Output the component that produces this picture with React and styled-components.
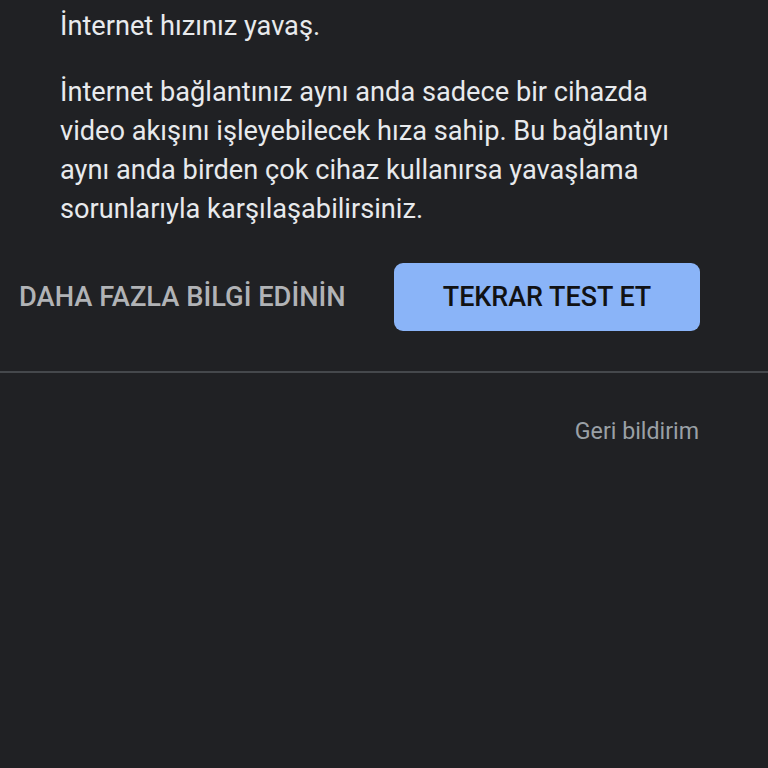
import React from "react";
import styled, { createGlobalStyle } from "styled-components";

const Global = createGlobalStyle`
  html, body { margin: 0; padding: 0; background: #202124; }
  body { font-family: Roboto, "Noto Sans", Arial, sans-serif; -webkit-font-smoothing: antialiased; }
  #root { min-height: 768px; }
`;

const Page = styled.div`
  width: 768px;
  height: 768px;
  background: #202124;
  display: flex;
  flex-direction: column;
  overflow: hidden;
`;

const Content = styled.div`
  padding: 7px 68px 0 60px;
`;

const Paragraph = styled.p`
  margin: 0 0 ${(p) => p.$gap || 0}px 0;
  font-size: 27.2px;
  line-height: 39px;
  color: #e8eaed;
  font-weight: 400;
`;

const Actions = styled.div`
  display: flex;
  align-items: center;
  justify-content: space-between;
  padding: 34px 68px 0 19px;
  height: 68px;
  box-sizing: content-box;
`;

const TextButton = styled.button`
  background: none;
  border: none;
  padding: 0;
  font-family: Roboto, sans-serif;
  font-weight: 500;
  font-size: 27.3px;
  color: #b1b3b6;
  cursor: pointer;
`;

const FilledButton = styled.button`
  width: 306px;
  height: 68px;
  border: none;
  border-radius: 9px;
  background: #8ab4f8;
  color: #111214;
  font-family: Roboto, sans-serif;
  font-weight: 500;
  font-size: 26.9px;
  cursor: pointer;
`;

const Divider = styled.hr`
  margin: 40px 0 0 0;
  border: none;
  height: 2px;
  background: #45484c;
`;

const Footer = styled.div`
  display: flex;
  justify-content: flex-end;
  padding: 45px 69px 0 0;
`;

const FooterLink = styled.span`
  font-size: 23.2px;
  line-height: 26px;
  color: #9aa0a6;
`;

export default function App() {
  return (
    <Page>
      <Global />
      <Content>
        <Paragraph $gap={27}>İnternet hızınız yavaş.</Paragraph>
        <Paragraph>
          İnternet bağlantınız aynı anda sadece bir cihazda video akışını
          işleyebilecek hıza sahip. Bu bağlantıyı aynı anda birden çok cihaz
          kullanırsa yavaşlama sorunlarıyla karşılaşabilirsiniz.
        </Paragraph>
      </Content>
      <Actions>
        <TextButton>DAHA FAZLA BİLGİ EDİNİN</TextButton>
        <FilledButton>TEKRAR TEST ET</FilledButton>
      </Actions>
      <Divider />
      <Footer>
        <FooterLink>Geri bildirim</FooterLink>
      </Footer>
    </Page>
  );
}
